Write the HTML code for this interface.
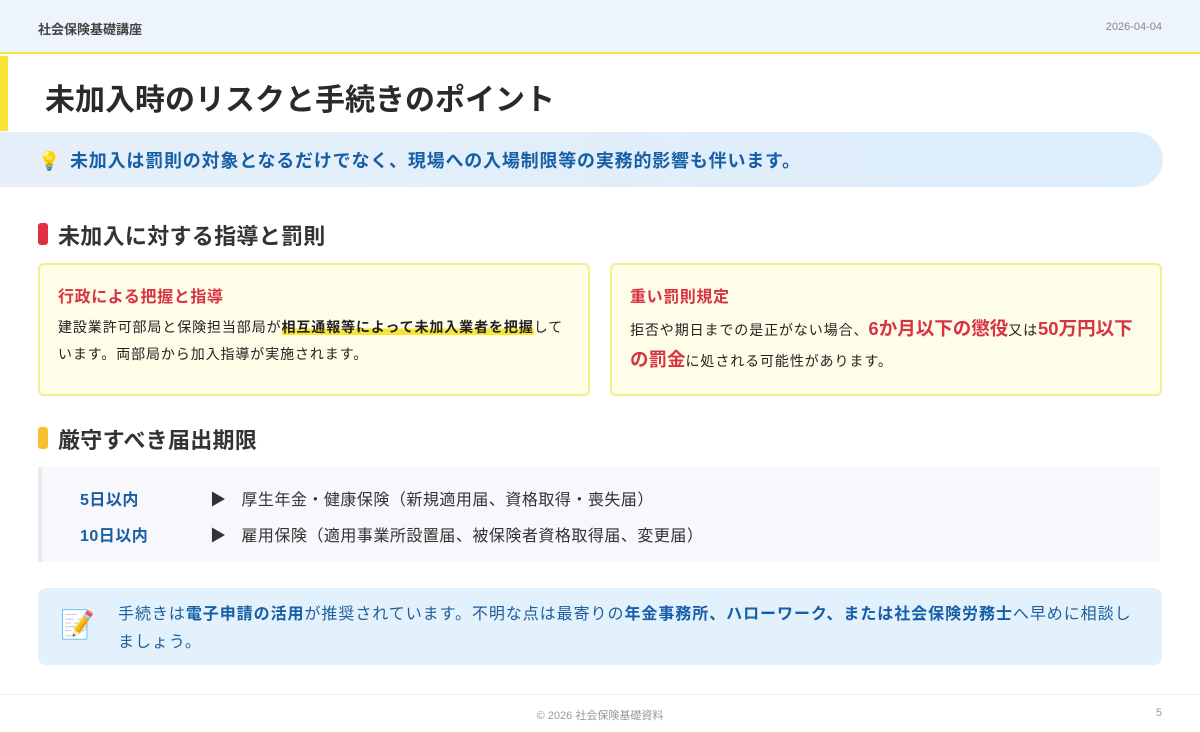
<!DOCTYPE html>
<html><head><meta charset="utf-8"><style>
*{margin:0;padding:0;box-sizing:border-box}
body{width:1200px;height:732px;overflow:hidden;background:#fff;font-family:"Liberation Sans","Noto Sans CJK JP",sans-serif;color:#333;position:relative}
.hdr{position:absolute;left:0;top:0;width:1200px;height:54px;background:#eef4fc;border-bottom:2px solid #f5e642}
.hdr .l{position:absolute;left:38px;top:19px;font-size:13px;font-weight:bold;color:#444}
.hdr .r{position:absolute;right:38px;top:21px;font-size:11px;color:#888}
.title{position:absolute;left:0;top:56px;width:1200px;height:75px;background:#fff;border-left:8px solid #f8e432}
.title h1{position:absolute;left:37px;top:19px;font-size:30px;font-weight:bold;color:#2a2a2a}
.info{position:absolute;left:0;top:132px;width:1163px;height:55px;background:linear-gradient(90deg,#e6eff9,#ddeefc);border-radius:0 28px 28px 0}
.info .b{position:absolute;left:38px;top:16px;font-size:18px;line-height:26px}
.info span{position:absolute;left:70px;top:16px;font-size:18px;line-height:26px;letter-spacing:0.8px;font-weight:bold;color:#165fa6}
.sh{position:absolute;left:38px;font-size:22px;letter-spacing:0.3px;font-weight:bold;color:#333;padding-left:20px}
.sh:before{content:"";position:absolute;left:0;top:4px;width:10px;height:22px;border-radius:3px}
.s1:before{background:#e03040}.s2:before{background:#f8c030}
.card{position:absolute;top:263px;height:133px;background:#fefde7;border:2px solid #f3f08a;border-radius:6px;padding:18px 18px}
.card h3{font-size:16px;letter-spacing:0.6px;color:#d83345;font-weight:bold;margin-bottom:7px}
.card p{font-size:14px;letter-spacing:0.9px;line-height:27px;color:#222}
.card2 p{line-height:29px;margin-top:2px}
.hl{font-weight:bold;background:linear-gradient(transparent 60%,#f8e432 60%)}
.red{color:#d83345;font-weight:bold;font-size:18.5px;letter-spacing:0}
.dl{position:absolute;left:38px;top:467px;width:1122px;height:95px;background:#f8f7fb;border-left:4px solid #eceaf0;font-size:16px;letter-spacing:0.5px}
.dl div{position:absolute;left:38px}
.dl b{color:#165fa6;display:inline-block;width:130px}
.note{position:absolute;left:38px;top:588px;width:1124px;height:77px;background:#e3f1fd;border-radius:8px}
.note .ic{position:absolute;left:22px;top:20px;font-size:28px}
.note p{position:absolute;left:80px;top:13px;width:1020px;font-size:16px;letter-spacing:0.95px;line-height:28px;color:#1e5f9a}
.note b{color:#165fa6}
.ft{position:absolute;left:0;top:694px;width:1200px;height:38px;border-top:1px solid #eee}
.ft .c{position:absolute;left:0;width:1200px;text-align:center;top:12px;font-size:11px;color:#999}
.ft .n{position:absolute;right:38px;top:12px;font-size:11px;color:#999}
</style></head><body>
<div class="hdr"><div class="l">社会保険基礎講座</div><div class="r">2026-04-04</div></div>
<div class="title"><h1>未加入時のリスクと手続きのポイント</h1></div>
<div class="info"><div class="b">💡</div><span>未加入は罰則の対象となるだけでなく、現場への入場制限等の実務的影響も伴います。</span></div>
<div class="sh s1" style="top:219px">未加入に対する指導と罰則</div>
<div class="card" style="left:38px;width:552px"><h3>行政による把握と指導</h3><p>建設業許可部局と保険担当部局が<span class="hl">相互通報等によって未加入業者を把握</span>しています。両部局から加入指導が実施されます。</p></div>
<div class="card card2" style="left:610px;width:552px"><h3>重い罰則規定</h3><p>拒否や期日までの是正がない場合、<span class="red">6か月以下の懲役</span>又は<span class="red">50万円以下の罰金</span>に処される可能性があります。</p></div>
<div class="sh s2" style="top:423px">厳守すべき届出期限</div>
<div class="dl"><div style="top:19px"><b>5日以内</b>▶&nbsp;&nbsp;&nbsp;厚生年金・健康保険（新規適用届、資格取得・喪失届）</div><div style="top:55px"><b>10日以内</b>▶&nbsp;&nbsp;&nbsp;雇用保険（適用事業所設置届、被保険者資格取得届、変更届）</div></div>
<div class="note"><div class="ic">📝</div><p>手続きは<b>電子申請の活用</b>が推奨されています。不明な点は最寄りの<b>年金事務所、ハローワーク、または社会保険労務士</b>へ早めに相談しましょう。</p></div>
<div class="ft"><div class="c">© 2026 社会保険基礎資料</div><div class="n">5</div></div>
</body></html>
